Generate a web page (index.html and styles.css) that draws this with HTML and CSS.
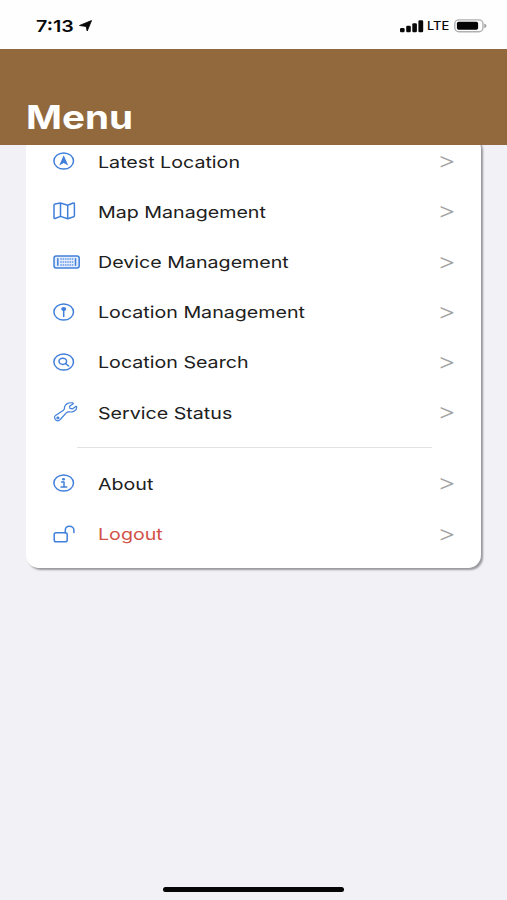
FILE: index.html
```
<!DOCTYPE html>
<html lang="en">
<head>
<meta charset="utf-8">
<title>Menu</title>
<link rel="stylesheet" href="styles.css">
</head>
<body>
<div class="screen">
  <div class="status">
    <span class="time wide">7:13</span>
    <svg class="arrow" width="14" height="12" viewBox="0 0 14 12"><path d="M12.500.6 8.200 11 7.200 6.400.5 5.500Z" fill="#080808" stroke="#080808" stroke-width=".9" stroke-linejoin="round"/></svg>
    <svg class="signal" width="24" height="13" viewBox="0 0 24 13" fill="#080808"><rect x="0" y="8" width="4.600" height="4.200" rx="1.300"/><rect x="6.200" y="5.700" width="4.600" height="6.500" rx="1.300"/><rect x="12.300" y="3.200" width="4.600" height="9" rx="1.300"/><rect x="18.400" y=".3" width="4.800" height="11.900" rx="1.300"/></svg>
    <span class="lte wide">LTE</span>
    <svg class="battery" width="34" height="14" viewBox="0 0 34 14"><rect x=".8" y=".9" width="28.200" height="11.900" rx="4" fill="#fff" stroke="#b0b0b0" stroke-width="1.400"/><rect x="2.900" y="2.800" width="21.200" height="8" rx="1.800" fill="#050505"/><path d="M30.600 5c2 .3 2 3.400 0 3.700Z" fill="#a0a0a0" stroke="#a0a0a0" stroke-width=".6"/></svg>
  </div>
  <header class="header"><h1 class="title wide">Menu</h1></header>
  <main class="content">
    <nav class="card">
      <div class="row">
        <svg class="icon" viewBox="0 0 28 24"><ellipse cx="10.700" cy="12" rx="9.800" ry="8.100"/><path class="fill" d="M10.700 6.300 15.200 16.500 10.700 14 6.200 16.500Z"/></svg>
        <span class="label wide">Latest Location</span><span class="chevron">&gt;</span>
      </div>
      <div class="row">
        <svg class="icon" viewBox="0 0 28 24"><path d="M1 6.200Q1 5.200 2 4.900L7.500 4 14.700 6.300 20.300 4Q21.400 3.700 21.400 4.800V16.800Q21.400 17.500 20.700 17.800L14.700 19.800 7.500 17.400 2 19.500Q1 19.800 1 18.800ZM7.500 4V17.400M14.700 6.300V19.800"/></svg>
        <span class="label wide">Map Management</span><span class="chevron">&gt;</span>
      </div>
      <div class="row">
        <svg class="icon" viewBox="0 0 28 24"><rect class="pale" x="1" y="6" width="25.200" height="12" rx="2.200"/><path d="M4.800 8.700V15.300M22.500 8.700V15.300"/><path class="mesh" d="M7.300 9H20.500M7.300 12H20.500M7.300 15H20.500"/></svg>
        <span class="label wide">Device Management</span><span class="chevron">&gt;</span>
      </div>
      <div class="row">
        <svg class="icon" viewBox="0 0 28 24"><ellipse cx="10.700" cy="12" rx="9.800" ry="8.100"/><ellipse class="fill" cx="10.700" cy="9" rx="2.500" ry="2"/><path d="M10.700 10V16.400"/></svg>
        <span class="label wide">Location Management</span><span class="chevron">&gt;</span>
      </div>
      <div class="row">
        <svg class="icon" viewBox="0 0 28 24"><ellipse cx="10.700" cy="12" rx="9.800" ry="8.100"/><ellipse cx="9.800" cy="11.300" rx="3.800" ry="3.100"/><path d="M12.600 13.600 15.700 16"/></svg>
        <span class="label wide">Location Search</span><span class="chevron">&gt;</span>
      </div>
      <div class="row">
        <svg class="icon" viewBox="0 0 28 24"><path class="thin" d="M1.800 18.200C1 17 1.500 16.200 2.500 15.400L10.500 10.200C11.500 9.400 11.300 8.600 11.500 7.300C12 4 15.500 2.200 19.800 2.900L20.300 3.700 16.500 6.200 17 8.400 19.400 8.900 23 6.300 23.800 6.900C23.700 10.300 20 12.500 16.300 11.900C14.800 11.700 14 12 13.200 12.800L7.300 19.500C6 21.300 3.500 21.200 2.400 19.600Z"/><ellipse class="thin" cx="4.900" cy="18" rx="1" ry=".8"/></svg>
        <span class="label wide">Service Status</span><span class="chevron">&gt;</span>
      </div>
      <hr class="divider">
      <div class="row">
        <svg class="icon" viewBox="0 0 28 24"><ellipse cx="10.700" cy="12" rx="9.800" ry="8.100"/><ellipse class="fill" cx="10.500" cy="8.200" rx="1.500" ry="1.200"/><path d="M8.500 11H11V16M8 16H13.700"/></svg>
        <span class="label wide">About</span><span class="chevron">&gt;</span>
      </div>
      <div class="row">
        <svg class="icon" viewBox="0 0 28 24"><rect x="1.200" y="10.800" width="13" height="9" rx="1.800"/><path d="M12.300 10.800V8.200C12.300 2.900 20.900 2.900 20.900 8.200V10.500"/></svg>
        <span class="label wide danger">Logout</span><span class="chevron">&gt;</span>
      </div>
    </nav>
  </main>
  <div class="home"></div>
</div>
</body>
</html>
```
FILE: styles.css
```
* { box-sizing: border-box; }
body {
  margin: 0;
  background: #f2f1f6;
  font-family: Inter, "Liberation Sans", sans-serif;
  color: #202020;
}
.screen {
  height: 900px;
  display: flex;
  flex-direction: column;
  overflow: hidden;
}
.wide {
  transform: scaleX(1.19);
  transform-origin: left center;
  white-space: nowrap;
}
.status {
  height: 49px;
  flex: none;
  display: flex;
  align-items: center;
  padding: 3px 20px 0 36px;
  background: #fefefe;
  color: #080808;
}
.time {
  width: 43px;
  font-size: 16.500px;
  font-weight: 600;
}
.signal { margin-left: auto; }
.lte {
  width: 22px;
  margin: 0 5px 0 3px;
  font-size: 11.500px;
  font-weight: 500;
  transform: scaleX(1.12);
}
.battery { margin-right: -1px; }
.header {
  height: 96px;
  flex: none;
  display: flex;
  align-items: flex-end;
  padding: 0 25.500px 8px;
  background: #91693d;
}
.title {
  margin: 0;
  font-size: 33px;
  line-height: 40px;
  font-weight: 700;
  color: #fff;
  transform: scaleX(1.17);
}
.content {
  flex: 1;
  padding: 0 26px;
  overflow: hidden;
}
.card {
  height: 432px;
  margin-top: -9px;
  padding-top: .2px;
  border-radius: 13px;
  background: #fff;
  box-shadow: 2px 2px 2px #98989c;
}
.row {
  height: 50.200px;
  display: flex;
  align-items: center;
  padding: 0 27px;
}
.icon {
  width: 28px;
  height: 24px;
  margin-right: 17px;
  fill: none;
  stroke: #407fda;
  stroke-width: 1.500;
  stroke-linecap: round;
  stroke-linejoin: round;
}
.icon .fill { fill: #407fda; stroke: none; }
.icon .thin { stroke-width: 1.200; }
.icon .pale { fill: #e4edfb; }
.icon .mesh { stroke: #82aceb; stroke-width: 2; stroke-dasharray: 1.500 .8; stroke-linecap: butt; }
.label {
  flex: 1;
  width: 0;
  padding-top: .6px;
  font-size: 16.500px;
  line-height: 24px;
}
.danger { color: #d15348; }
.chevron {
  width: 16px;
  font-size: 22px;
  line-height: 24px;
  font-weight: 300;
  color: #a3a3a3;
  transform: translate(-1px, -1px) scaleX(1.32);
  transform-origin: left center;
}
.divider {
  height: 1px;
  margin: 9.700px 49px 10.300px 51px;
  border: 0;
  background: #e2e2e4;
}
.home {
  width: 181px;
  height: 5px;
  flex: none;
  align-self: center;
  margin-bottom: 8px;
  border-radius: 3px;
  background: #050505;
}
```
